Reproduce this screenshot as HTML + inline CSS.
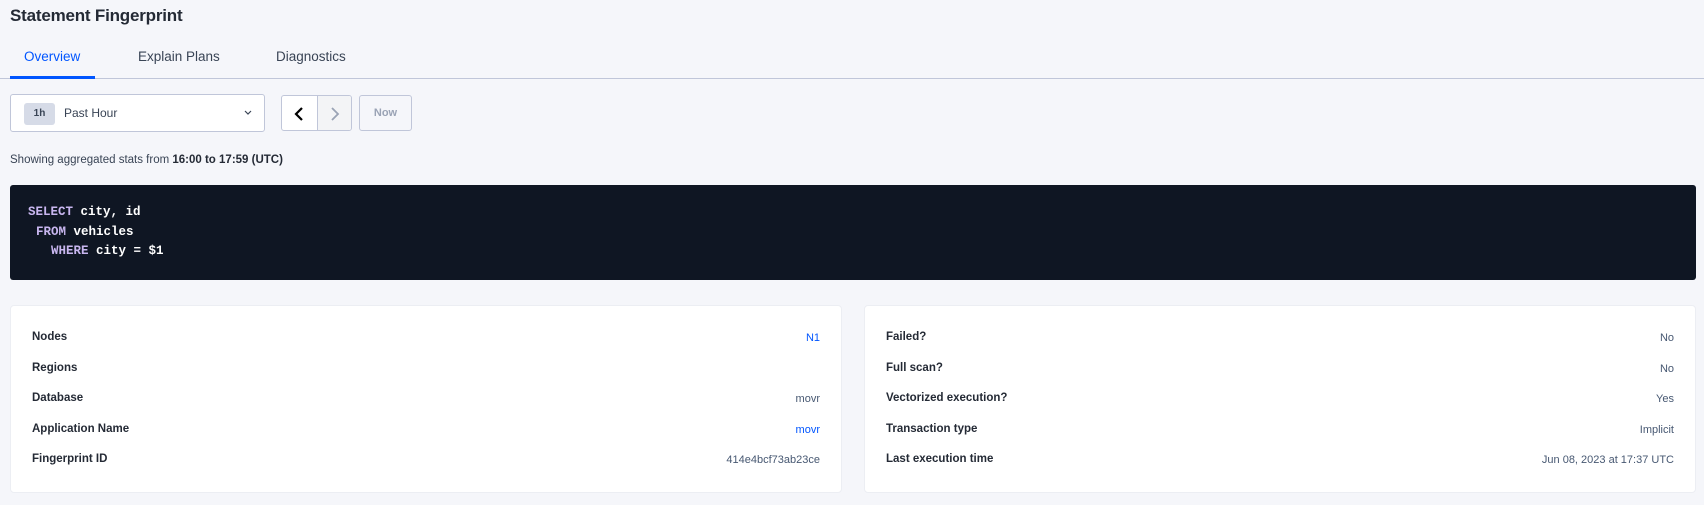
<!DOCTYPE html>
<html><head><style>
*{box-sizing:border-box;margin:0;padding:0}
body{width:1704px;height:505px;background:#f5f6fa;font-family:"Liberation Sans",sans-serif;color:#394455;position:relative;overflow:hidden}
.a{position:absolute;white-space:nowrap}
.title{left:10px;top:6px;font-size:17px;font-weight:bold;color:#242a35;letter-spacing:-0.2px}
.tab{top:49px;font-size:13.5px;color:#394455}
.line{left:0;top:78px;width:1704px;height:1px;background:#c0c6d9}
.ul{left:10px;top:76px;width:85px;height:3px;background:#0055ff}
.dd{left:10px;top:94px;width:255px;height:38px;background:#fff;border:1px solid #c0c6d9;border-radius:3px}
.badge{left:24px;top:103px;width:31px;height:22px;background:#d6dbe7;border-radius:3px;font-size:10px;font-weight:bold;text-align:center;line-height:22px;color:#394455}
.nav{left:281px;top:95px;width:71px;height:36px;border:1px solid #c0c6d9;border-radius:3px;background:#fff;overflow:hidden}
.now{left:359px;top:95px;width:53px;height:36px;border:1px solid #c0c6d9;border-radius:3px;font-size:11px;font-weight:bold;color:#9aa3b5;text-align:center;line-height:34px}
.code{left:10px;top:185px;width:1686px;height:95px;background:#0f1623;border-radius:3px}
.cl{font-family:"Liberation Mono",monospace;font-weight:bold;font-size:12.5px;color:#fff}
.kw{color:#c8b6ef}
.card{background:#fff;border-radius:4px;border:1px solid #eceef3;top:305px;height:188px}
.lb{font-size:11.5px;font-weight:bold;color:#242a35}
.v{font-size:11px;color:#475872;text-align:right}
.blue{color:#0055ff}
</style></head><body>
<div class="a title">Statement Fingerprint</div>
<div class="a tab" style="left:24px;color:#0055ff">Overview</div>
<div class="a tab" style="left:138px">Explain Plans</div>
<div class="a tab" style="left:276px">Diagnostics</div>
<div class="a line"></div><div class="a ul"></div>
<div class="a dd"></div>
<div class="a badge">1h</div>
<div class="a" style="left:64px;top:106px;font-size:12px;color:#394455">Past Hour</div>
<svg class="a" style="left:244px;top:110px" width="8" height="6"><path d="M1 1l3 3 3-3" stroke="#394455" stroke-width="1.2" fill="none"/></svg>
<div class="a nav"><div style="position:absolute;left:35px;top:0;width:36px;height:36px;background:#f3f4f6;border-left:1px solid #c0c6d9"></div>
<svg style="position:absolute;left:11px;top:10px" width="12" height="16"><path d="M9 2L3 8l6 6" stroke="#000" stroke-width="2.2" fill="none"/></svg>
<svg style="position:absolute;left:47px;top:10px" width="12" height="16"><path d="M3 2l6 6-6 6" stroke="#9aa3b5" stroke-width="1.8" fill="none"/></svg></div>
<div class="a now">Now</div>
<div class="a" style="left:10px;top:154px;font-size:11.5px;color:#394455">Showing aggregated stats from <b style="color:#242a35">16:00 to 17:59 (UTC)</b></div>
<div class="a code"></div>
<div class="a cl" style="left:28px;top:205px"><span class="kw">SELECT</span> city, id</div>
<div class="a cl" style="left:36px;top:225px"><span class="kw">FROM</span> vehicles</div>
<div class="a cl" style="left:51px;top:244px"><span class="kw">WHERE</span> city = $1</div>
<div class="a card" style="left:10px;width:832px"></div>
<div class="a card" style="left:864px;width:832px"></div>
<div class="a lb" style="left:32px;top:331px">Nodes</div><div class="a v blue" style="right:884px;top:332px">N1</div>
<div class="a lb" style="left:32px;top:362px">Regions</div>
<div class="a lb" style="left:32px;top:392px">Database</div><div class="a v" style="right:884px;top:393px">movr</div>
<div class="a lb" style="left:32px;top:423px">Application Name</div><div class="a v blue" style="right:884px;top:424px">movr</div>
<div class="a lb" style="left:32px;top:453px">Fingerprint ID</div><div class="a v" style="right:884px;top:454px">414e4bcf73ab23ce</div>
<div class="a lb" style="left:886px;top:331px">Failed?</div><div class="a v" style="right:30px;top:332px">No</div>
<div class="a lb" style="left:886px;top:362px">Full scan?</div><div class="a v" style="right:30px;top:363px">No</div>
<div class="a lb" style="left:886px;top:392px">Vectorized execution?</div><div class="a v" style="right:30px;top:393px">Yes</div>
<div class="a lb" style="left:886px;top:423px">Transaction type</div><div class="a v" style="right:30px;top:424px">Implicit</div>
<div class="a lb" style="left:886px;top:453px">Last execution time</div><div class="a v" style="right:30px;top:454px">Jun 08, 2023 at 17:37 UTC</div>
</body></html>
